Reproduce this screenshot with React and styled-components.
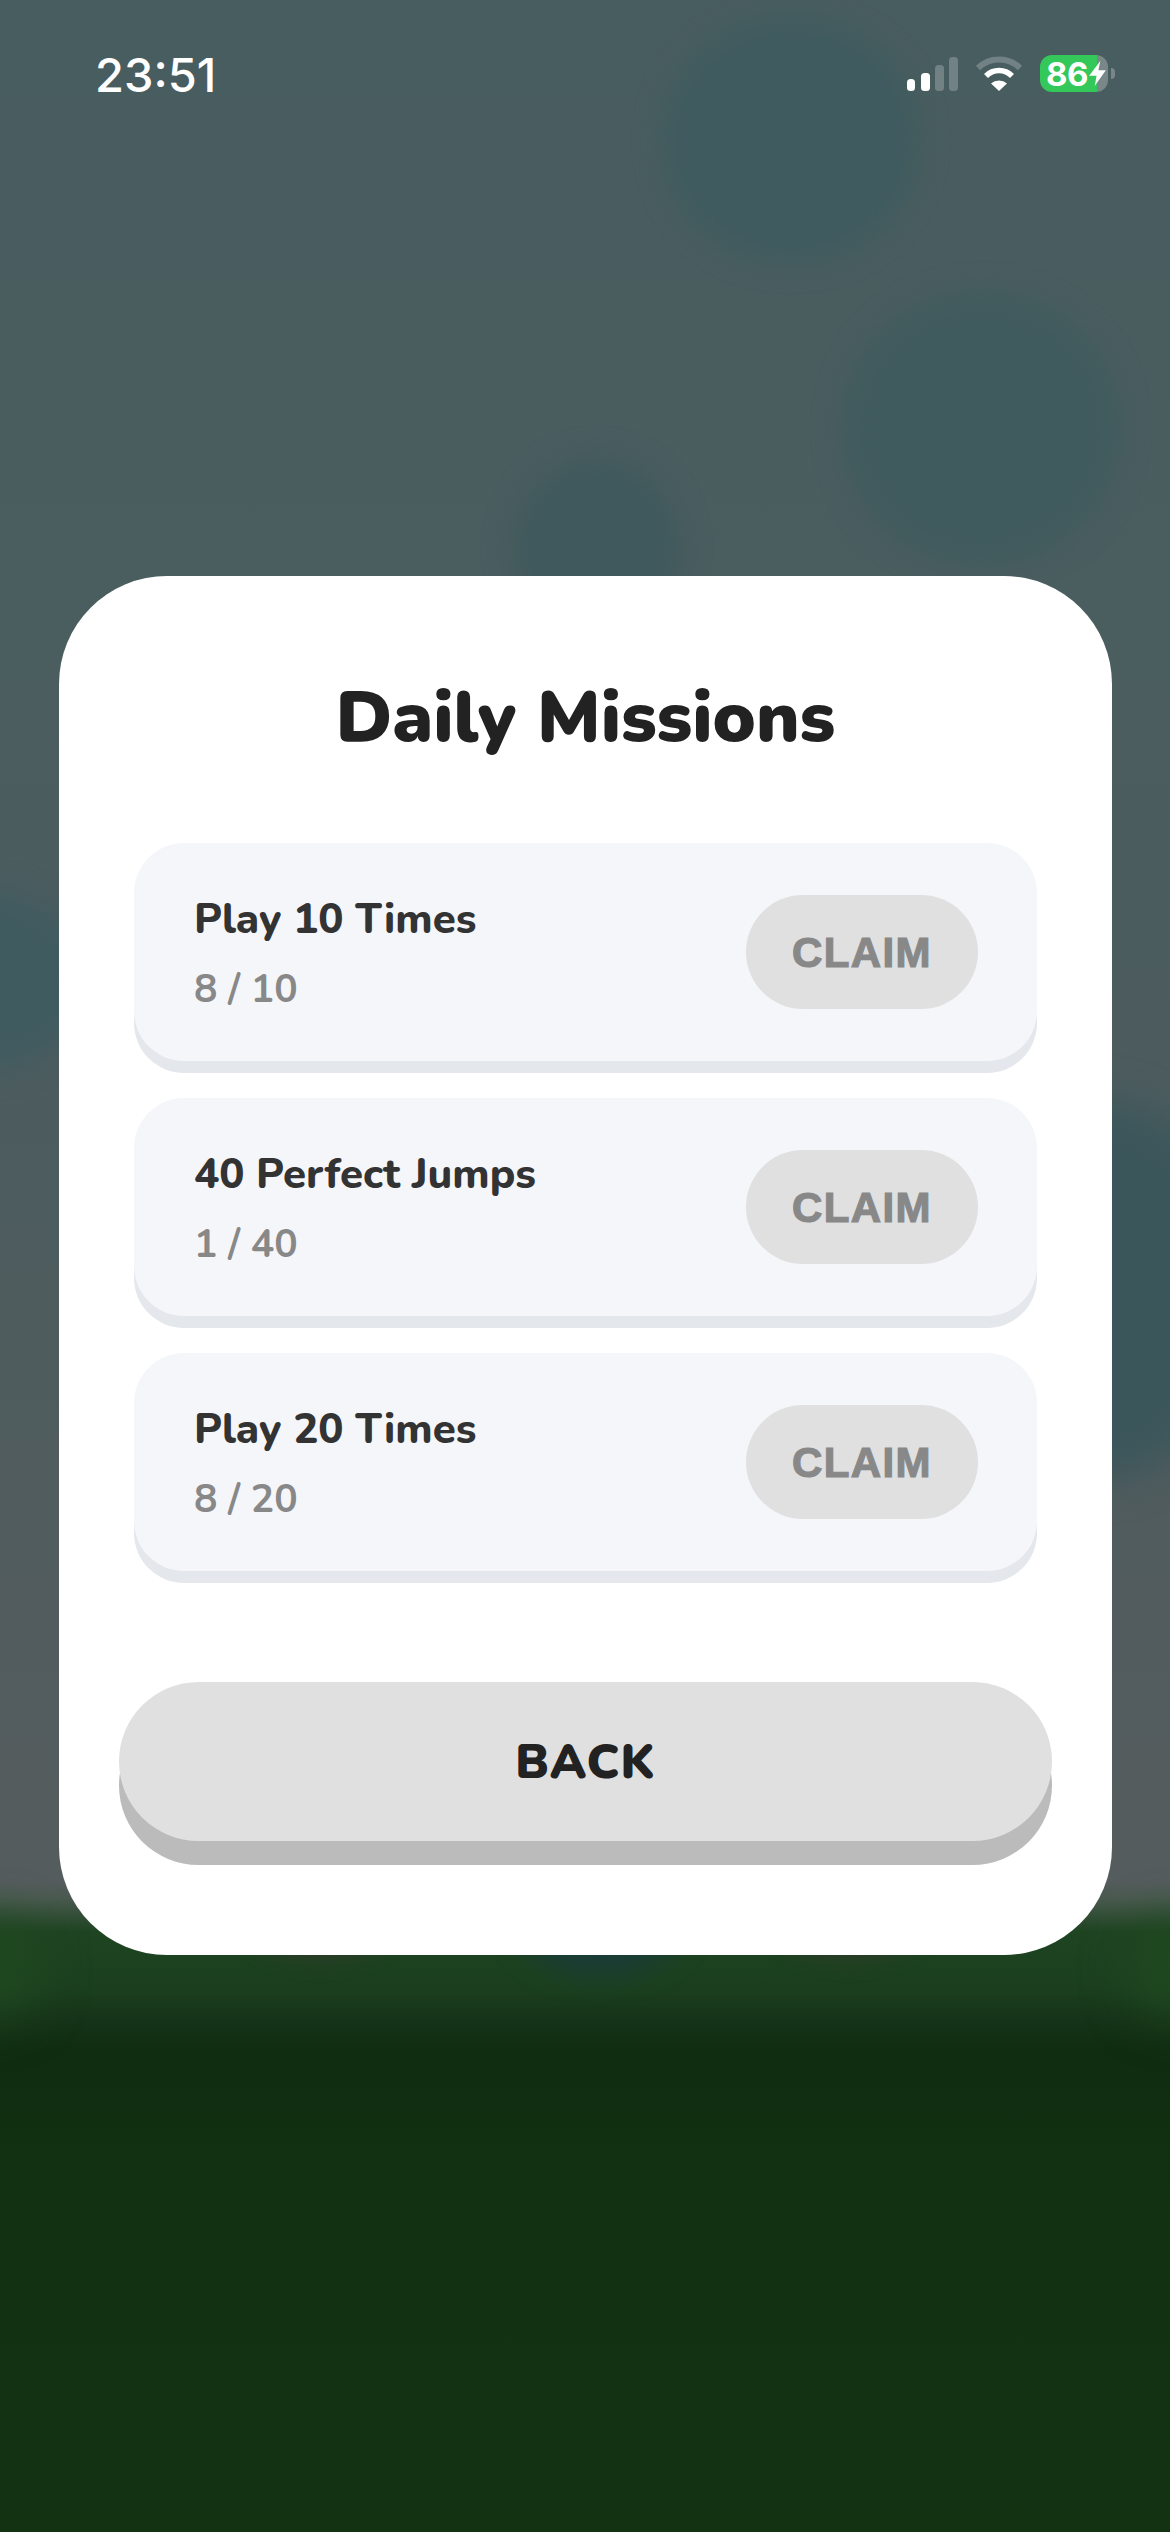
import React from "react";
import styled, { createGlobalStyle } from "styled-components";

const Global = createGlobalStyle`
  html, body { margin: 0; padding: 0; background: #133212; }
`;

const Page = styled.div`
  position: relative;
  width: 1170px;
  height: 2532px;
  overflow: hidden;
  display: flex;
  flex-direction: column;
`;

const Backdrop = styled.div`
  position: absolute;
  inset: 0;
  overflow: hidden;
  background: linear-gradient(
    180deg,
    #485d5f 0,
    #4a5d5f 600px,
    #4d5c5e 1200px,
    #555c5e 1880px,
    #4a5a50 1898px,
    #1e4421 1932px,
    #1b3f1e 1990px,
    #163419 2018px,
    #102c11 2050px,
    #123112 2200px,
    #133212 2532px
  );
`;

const Blob = styled.div`
  position: absolute;
  left: ${(p) => p.$x - p.$w / 2}px;
  top: ${(p) => p.$y - p.$h / 2}px;
  width: ${(p) => p.$w}px;
  height: ${(p) => p.$h}px;
  border-radius: 50%;
  background: ${(p) => p.$c};
  filter: blur(${(p) => p.$blur}px);
`;

const StatusBar = styled.div`
  position: relative;
  height: 93px;
  padding: 54px 55px 0 95px;
  box-sizing: border-box;
  display: flex;
  justify-content: space-between;
  align-items: flex-start;
  flex-shrink: 0;
`;

const Clock = styled.div`
  font-family: Inter, "Liberation Sans", sans-serif;
  font-weight: 500;
  font-size: 47px;
  line-height: 42px;
  letter-spacing: 0;
  color: #fff;
`;

const StatusIcons = styled.div`
  display: flex;
  align-items: flex-start;
  gap: 17px;
  margin-top: 1px;
`;

const SignalSvg = styled.svg`
  display: block;
  width: 51px;
  height: 34px;
  margin-top: 2px;
`;

const WifiSvg = styled.svg`
  display: block;
  width: 48px;
  height: 35px;
  margin-top: 1px;
`;

const BatteryWrap = styled.div`
  display: flex;
  align-items: center;
  gap: 3px;
`;

const BatteryBody = styled.div`
  width: 68px;
  height: 37px;
  border-radius: 12px;
  background: linear-gradient(90deg, #34c759 57px, #7a8789 57px);
  display: flex;
  align-items: center;
  padding-left: 6px;
  box-sizing: border-box;
  font-family: Inter, "Liberation Sans", sans-serif;
  font-weight: 700;
  font-size: 33px;
  letter-spacing: -0.4px;
  color: #fff;
`;

const BoltSvg = styled.svg`
  display: block;
  width: 17px;
  height: 25px;
  margin-left: 1px;
  flex-shrink: 0;
`;

const BatteryNub = styled.div`
  width: 4px;
  height: 11px;
  background: #7a8789;
  border-radius: 0 4px 4px 0;
`;

const Modal = styled.section`
  position: relative;
  width: 1053px;
  height: 1379px;
  margin: 483px 0 0 59px;
  box-sizing: border-box;
  background: #fff;
  border-radius: 108px;
  padding: 106px 60px 0;
  display: flex;
  flex-direction: column;
`;

const Title = styled.h1`
  margin: 0;
  height: 70px;
  font-family: Nunito, Lato, "Liberation Sans", sans-serif;
  font-weight: 900;
  font-size: 72px;
  line-height: 70px;
  text-align: center;
  color: #222;
`;

const MissionList = styled.div`
  margin: 91px 15px 0;
  display: flex;
  flex-direction: column;
  gap: 37px;
`;

const MissionCard = styled.div`
  height: 218px;
  box-sizing: border-box;
  padding: 0 59px 0 60px;
  background: #f5f6fa;
  border-radius: 50px;
  box-shadow: 0 12px 0 #e4e7ec;
  display: flex;
  align-items: center;
  justify-content: space-between;
`;

const MissionInfo = styled.div`
  display: flex;
  flex-direction: column;
  gap: 20px;
  padding-top: 5px;
`;

const MissionName = styled.div`
  font-family: Nunito, Lato, "Liberation Sans", sans-serif;
  font-weight: 800;
  font-size: 42px;
  line-height: 50px;
  color: #333;
`;

const MissionProgress = styled.div`
  font-family: Nunito, Lato, "Liberation Sans", sans-serif;
  font-weight: 700;
  font-size: 39px;
  line-height: 50px;
  color: #888;
`;

const ClaimButton = styled.button`
  width: 232px;
  height: 114px;
  border: 0;
  padding: 2px 0 0;
  border-radius: 57px;
  background: #e0e0e0;
  font-family: "Liberation Sans", Arial, sans-serif;
  font-weight: 700;
  font-size: 42px;
  letter-spacing: 1.4px;
  -webkit-text-stroke: 1.2px #888;
  color: #888;
  text-align: center;
`;

const BackButton = styled.button`
  margin-top: 111px;
  height: 159px;
  width: 100%;
  flex-shrink: 0;
  border: 0;
  padding: 0;
  border-radius: 80px;
  background: #e0e0e0;
  box-shadow: 0 24px 0 #bbb;
  font-family: Nunito, Lato, "Liberation Sans", sans-serif;
  font-weight: 900;
  font-size: 48px;
  letter-spacing: 1px;
  color: #222;
  text-align: center;
`;

const blobs = [
  { x: 791, y: 141, w: 256, h: 242, c: "#3f5b5f", blur: 14 },
  { x: 981, y: 429, w: 278, h: 272, c: "#405b5e", blur: 14 },
  { x: 597, y: 550, w: 168, h: 186, c: "#40595d", blur: 14 },
  { x: -20, y: 980, w: 220, h: 180, c: "#405b60", blur: 14 },
  { x: 1090, y: 1290, w: 320, h: 380, c: "#3b565b", blur: 20 },
  { x: 600, y: 1915, w: 170, h: 120, c: "#1a3c38", blur: 14 },
  { x: 320, y: 1925, w: 130, h: 60, c: "#34382f", blur: 12 },
  { x: 850, y: 1925, w: 130, h: 60, c: "#34382f", blur: 12 },
  { x: -10, y: 1970, w: 90, h: 90, c: "#1f4a20", blur: 26 },
  { x: 1180, y: 1970, w: 90, h: 90, c: "#1f4a20", blur: 26 },
];

const missions = [
  { name: "Play 10 Times", progress: "8 / 10" },
  { name: "40 Perfect Jumps", progress: "1 / 40" },
  { name: "Play 20 Times", progress: "8 / 20" },
];

export default function App() {
  return (
    <>
      <Global />
      <Page>
        <Backdrop>
          {blobs.map((b, i) => (
            <Blob key={i} $x={b.x} $y={b.y} $w={b.w} $h={b.h} $c={b.c} $blur={b.blur} />
          ))}
        </Backdrop>
        <StatusBar>
          <Clock>23:51</Clock>
          <StatusIcons>
            <SignalSvg viewBox="0 0 51 34">
              <rect x="0" y="22" width="8" height="12" rx="3.5" fill="#fff" />
              <rect x="14" y="16" width="9" height="18" rx="3.5" fill="#fff" />
              <rect x="28" y="8" width="9" height="26" rx="3.5" fill="#728184" />
              <rect x="42" y="0" width="9" height="34" rx="3.5" fill="#728184" />
            </SignalSvg>
            <WifiSvg viewBox="0 0 48 35">
              <path d="M3 12 A30 30 0 0 1 45 12" fill="none" stroke="#728184" strokeWidth="6" />
              <path d="M11 20 A18 18 0 0 1 37 20" fill="none" stroke="#fff" strokeWidth="5.5" />
              <path d="M24 35 L16 27.5 A12 12 0 0 1 32 27.5 Z" fill="#fff" />
            </WifiSvg>
            <BatteryWrap>
              <BatteryBody>
                86
                <BoltSvg viewBox="0 0 18 27">
                  <path d="M12 0 L0 16 H8 L6 27 L18 10 H10 Z" fill="#fff" />
                </BoltSvg>
              </BatteryBody>
              <BatteryNub />
            </BatteryWrap>
          </StatusIcons>
        </StatusBar>
        <Modal>
          <Title>Daily Missions</Title>
          <MissionList>
            {missions.map((m) => (
              <MissionCard key={m.name}>
                <MissionInfo>
                  <MissionName>{m.name}</MissionName>
                  <MissionProgress>{m.progress}</MissionProgress>
                </MissionInfo>
                <ClaimButton>CLAIM</ClaimButton>
              </MissionCard>
            ))}
          </MissionList>
          <BackButton>BACK</BackButton>
        </Modal>
      </Page>
    </>
  );
}
